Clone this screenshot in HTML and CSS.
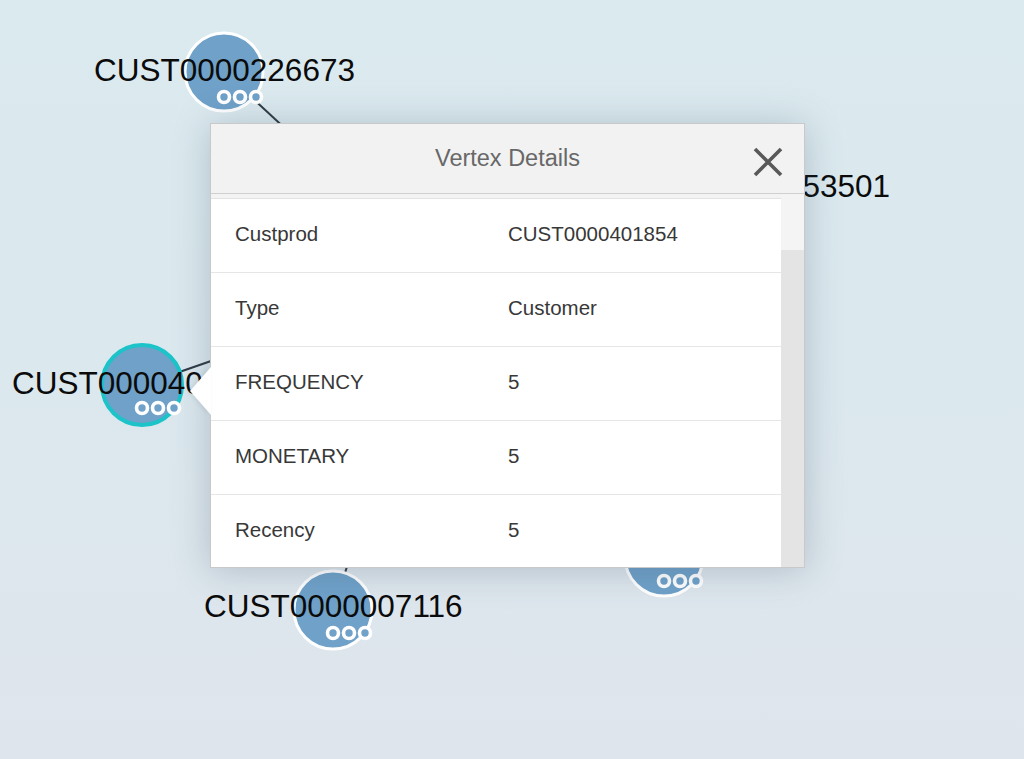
FILE: index.html
```html
<!DOCTYPE html>
<html lang="en">
<head>
<meta charset="utf-8">
<title>Vertex Details</title>
<link rel="stylesheet" href="styles.css">
</head>
<body>
<div class="canvas">
  <svg class="graph" width="1024" height="759" viewBox="0 0 1024 759">
    <g class="edges">
      <line x1="224" y1="72" x2="330" y2="170"/>
      <line x1="142" y1="385" x2="300" y2="330"/>
      <line x1="333" y1="610" x2="375" y2="480"/>
    </g>
    <g class="node">
      <circle class="disc" cx="224" cy="72" r="39"/>
      <circle class="ring" cx="224" cy="97" r="5.5"/>
      <circle class="ring" cx="240" cy="97" r="5.5"/>
      <circle class="ring" cx="256" cy="97" r="5.5"/>
    </g>
    <g class="node">
      <circle class="disc" cx="760" cy="188" r="39"/>
    </g>
    <g class="node">
      <circle class="disc" cx="664" cy="557" r="39"/>
      <circle class="ring" cx="664" cy="581" r="5.5"/>
      <circle class="ring" cx="680" cy="581" r="5.5"/>
      <circle class="ring" cx="696" cy="581" r="5.5"/>
    </g>
    <g class="node">
      <circle class="disc" cx="333" cy="610" r="39"/>
      <circle class="ring" cx="333" cy="633" r="5.5"/>
      <circle class="ring" cx="349" cy="633" r="5.5"/>
      <circle class="ring" cx="365" cy="633" r="5.5"/>
    </g>
    <g class="node selected">
      <circle class="disc" cx="142" cy="385" r="40"/>
      <circle class="ring" cx="142" cy="408" r="5.5"/>
      <circle class="ring" cx="158" cy="408" r="5.5"/>
      <circle class="ring" cx="174" cy="408" r="5.5"/>
    </g>
    <g class="labels">
      <text x="94" y="81">CUST0000226673</text>
      <text x="890" y="197" text-anchor="end">CUST0000053501</text>
      <text x="12" y="394">CUST0000401854</text>
      <text x="204" y="617">CUST0000007116</text>
    </g>
  </svg>

  <div class="popup">
    <div class="popup-arrow"></div>
    <div class="popup-header">
      <span class="popup-title">Vertex Details</span>
      <button class="close" aria-label="Close">
        <svg width="30" height="30" viewBox="0 0 30 30"><path d="M2 2 L28 28 M28 2 L2 28"/></svg>
      </button>
    </div>
    <div class="popup-body">
      <div class="rows">
        <div class="row"><span class="key">Custprod</span><span class="val">CUST0000401854</span></div>
        <div class="row"><span class="key">Type</span><span class="val">Customer</span></div>
        <div class="row"><span class="key">FREQUENCY</span><span class="val">5</span></div>
        <div class="row"><span class="key">MONETARY</span><span class="val">5</span></div>
        <div class="row"><span class="key">Recency</span><span class="val">5</span></div>
      </div>
      <div class="scrollbar"><div class="thumb"></div></div>
    </div>
  </div>
</div>
</body>
</html>
```

FILE: styles.css
```css
html, body {
  margin: 0;
  padding: 0;
}
body {
  width: 1024px;
  height: 759px;
  overflow: hidden;
  font-family: "Liberation Sans", Arial, sans-serif;
}
.canvas {
  position: relative;
  width: 1024px;
  height: 759px;
  background: linear-gradient(180deg, #dbeaef 0%, #dbe8ee 50%, #dfe5ec 100%);
}
.graph {
  position: absolute;
  left: 0;
  top: 0;
}
.edges line {
  stroke: #2f3a44;
  stroke-width: 2;
}
.node .disc {
  fill: #6fa1c9;
  stroke: #ffffff;
  stroke-width: 3;
}
.node.selected .disc {
  stroke: #1cc3c9;
  stroke-width: 4;
}
.node .ring {
  fill: #6fa1c9;
  stroke: #ffffff;
  stroke-width: 3.6;
}
.labels text {
  font-family: "Liberation Sans", Arial, sans-serif;
  font-size: 31.5px;
  fill: #0b0b0b;
}

.popup {
  position: absolute;
  left: 210px;
  top: 123px;
  width: 595px;
  height: 445px;
  box-sizing: border-box;
  border: 1px solid #c9c9c9;
  background: #f3f3f3;
  box-shadow: 0 2px 34px rgba(60, 80, 100, 0.28);
  display: flex;
  flex-direction: column;
}
.popup-arrow {
  position: absolute;
  left: -21px;
  top: 243px;
  width: 0;
  height: 0;
  border-top: 24px solid transparent;
  border-bottom: 24px solid transparent;
  border-right: 21px solid #ffffff;
  filter: drop-shadow(-2px 0 2px rgba(60, 80, 100, 0.12));
}
.popup-header {
  position: relative;
  height: 69px;
  flex: none;
  background: #f2f2f2;
  border-bottom: 1px solid #cfcfcf;
  display: flex;
  align-items: center;
  justify-content: center;
}
.popup-title {
  font-size: 23.5px;
  color: #686868;
  margin-top: -1px;
}
.close {
  position: absolute;
  right: 21px;
  top: 23px;
  width: 30px;
  height: 30px;
  padding: 0;
  border: 0;
  background: transparent;
  display: block;
}
.close svg {
  display: block;
}
.close path {
  stroke: #595959;
  stroke-width: 3.6;
  fill: none;
}
.popup-body {
  flex: 1;
  display: flex;
  min-height: 0;
}
.rows {
  flex: 1;
  margin-top: 4px;
  background: #ffffff;
  border-top: 1px solid #e2e2e2;
  display: flex;
  flex-direction: column;
}
.row {
  height: 69px;
  flex: none;
  box-sizing: content-box;
  border-bottom: 1px solid #e6e6e6;
  display: grid;
  grid-template-columns: 273px 1fr;
  align-items: center;
  padding-left: 24px;
  padding-bottom: 4px;
  font-size: 20.5px;
  color: #383838;
}
.row:last-child {
  border-bottom: 0;
}
.scrollbar {
  width: 23px;
  flex: none;
  background: #f4f4f4;
  display: flex;
  flex-direction: column;
}
.thumb {
  margin-top: 56px;
  flex: 1;
  background: #e4e4e4;
}
```
